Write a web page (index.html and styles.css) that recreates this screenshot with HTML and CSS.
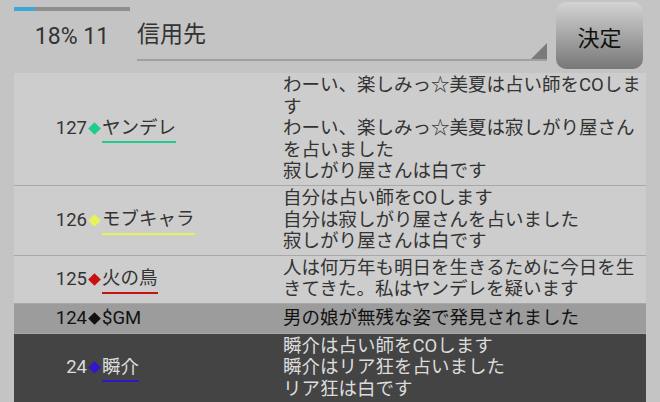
FILE: index.html
```html
<!DOCTYPE html>
<html lang="ja">
<head>
  <meta charset="UTF-8">
  <link rel="stylesheet" href="styles.css">
</head>
<body>
  <!-- 上部: 進捗 / 投票先 / 決定 -->
  <div class="top">
    <div class="status">
      <div class="progress"><div class="progress-fill" style="width:18%"></div></div>
      <div class="count">18% 11</div>
    </div>
    <div class="picker">
      <span class="picker-text">信用先</span>
      <span class="picker-arrow"></span>
    </div>
    <button class="ok">決定</button>
  </div>

  <!-- ログ一覧 -->
  <div class="log">
    <div class="entry">
      <div class="who">
        <span class="num">127</span><span class="mark green"></span><span class="name green">ヤンデレ</span>
      </div>
      <div class="msg">わーい、楽しみっ☆美夏は占い師をCOします<br>わーい、楽しみっ☆美夏は寂しがり屋さんを占いました<br>寂しがり屋さんは白です</div>
    </div>
    <div class="entry">
      <div class="who">
        <span class="num">126</span><span class="mark yellow"></span><span class="name yellow">モブキャラ</span>
      </div>
      <div class="msg">自分は占い師をCOします<br>自分は寂しがり屋さんを占いました<br>寂しがり屋さんは白です</div>
    </div>
    <div class="entry">
      <div class="who">
        <span class="num">125</span><span class="mark red"></span><span class="name red">火の鳥</span>
      </div>
      <div class="msg">人は何万年も明日を生きるために今日を生きてきた。私はヤンデレを疑います</div>
    </div>
    <div class="entry gm">
      <div class="who">
        <span class="num">124</span><span class="mark black"></span><span class="gm-name">$GM</span>
      </div>
      <div class="msg">男の娘が無残な姿で発見されました</div>
    </div>
    <div class="entry dark">
      <div class="who">
        <span class="num">24</span><span class="mark blue"></span><span class="name blue">瞬介</span>
      </div>
      <div class="msg">瞬介は占い師をCOします<br>瞬介はリア狂を占いました<br>リア狂は白です</div>
    </div>
  </div>
</body>
</html>
```

FILE: styles.css
```css
/* 全体 */
body {
  margin: 0;
  width: 660px;
  height: 402px;
  overflow: hidden;
  background: #c4c4c4;
  font-family: Roboto, "Noto Sans CJK JP", sans-serif;
  color: #333;
}

/* 上部バー */
.top {
  display: flex;
  height: 73px;
}
.status {
  width: 116px;
  margin-left: 14px;
  padding-top: 7px;
}
.progress {
  height: 4px;
  background: #8e8e8e;
}
.progress-fill {
  height: 100%;
  background: #3aa8d8;
}
.count {
  margin-top: 12px;
  text-align: center;
  font-size: 23px;
  line-height: 27px;
}

/* 信用先 (スピナー風) */
.picker {
  position: relative;
  width: 410px;
  height: 61px;
  margin-left: 7px;
  padding-top: 4px;
  box-sizing: border-box;
  border-bottom: 2px solid #a0a0a0;
  display: flex;
  align-items: center;
  font-size: 23px;
}
.picker-arrow {
  position: absolute;
  right: 0;
  bottom: 0;
  width: 0;
  height: 0;
  border-left: 16px solid transparent;
  border-bottom: 16px solid #7a7a7a;
}

.ok {
  width: 87px;
  height: 67px;
  margin: 2px 0 0 9px;
  padding: 0;
  border: none;
  border-radius: 10px;
  background: linear-gradient(#d4d4d4, #777);
  font-family: inherit;
  font-size: 22px;
  color: #111;
}

/* ログ */
.log {
  margin: 0 14px;
  height: 329px;
  background: #cdcdcd;
}
.entry {
  display: flex;
  padding: 2px 0;
  border-bottom: 1px solid #a8a8a8;
  font-size: 18.5px;
  line-height: 21.6px;
}
.who {
  width: 269px;
  flex-shrink: 0;
  display: flex;
  align-items: center;
}
.num {
  width: 73px;
  flex-shrink: 0;
  text-align: right;
}
.mark {
  flex-shrink: 0;
  width: 9px;
  height: 9px;
  margin: 0 3px 0 3px;
  transform: rotate(45deg);
}
.name {
  display: inline-block;
  padding-top: 3px;
  padding-bottom: 2px;
  border-bottom: 2px solid;
}
.msg {
  flex: 1;
}

/* 色 */
.mark.green { background: #20cc8c; }
.mark.yellow { background: #e6f35a; }
.mark.red { background: #c81212; }
.mark.blue { background: #3018c8; }
.mark.black { background: #111; }
.name.green { border-color: #20cc8c; }
.name.yellow { border-color: #e6f35a; }
.name.red { border-color: #c81212; }
.name.blue { border-color: #3018c8; }

/* GM行 / 自分の行 */
.entry.gm {
  background: #9c9c9c;
  color: #111;
  padding: 4px 0 3px;
}
.entry.dark {
  background: #444;
  color: #dcdcdc;
}
```
